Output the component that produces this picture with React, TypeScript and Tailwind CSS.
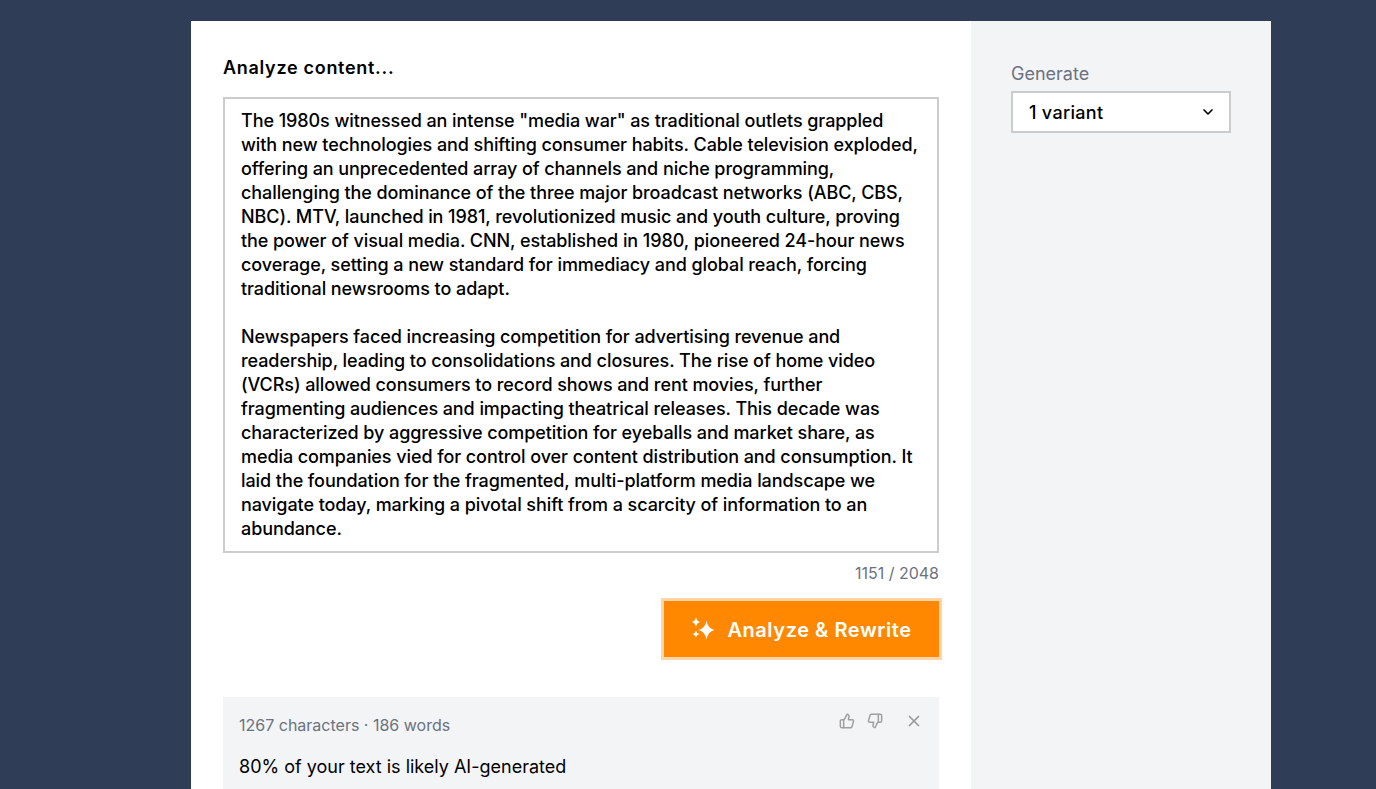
import { ThumbsUp, ThumbsDown, X, ChevronDown } from "lucide-react";

const body = [
  'The 1980s witnessed an intense "media war" as traditional outlets grappled',
  "with new technologies and shifting consumer habits. Cable television exploded,",
  "offering an unprecedented array of channels and niche programming,",
  "challenging the dominance of the three major broadcast networks (ABC, CBS,",
  "NBC). MTV, launched in 1981, revolutionized music and youth culture, proving",
  "the power of visual media. CNN, established in 1980, pioneered 24-hour news",
  "coverage, setting a new standard for immediacy and global reach, forcing",
  "traditional newsrooms to adapt.",
  "",
  "Newspapers faced increasing competition for advertising revenue and",
  "readership, leading to consolidations and closures. The rise of home video",
  "(VCRs) allowed consumers to record shows and rent movies, further",
  "fragmenting audiences and impacting theatrical releases. This decade was",
  "characterized by aggressive competition for eyeballs and market share, as",
  "media companies vied for control over content distribution and consumption. It",
  "laid the foundation for the fragmented, multi-platform media landscape we",
  "navigate today, marking a pivotal shift from a scarcity of information to an",
  "abundance.",
];

function Sparks() {
  return (
    <svg width="24" height="24" viewBox="0 0 24 24" fill="white">
      <path d="M15.5 3.5 Q16.6 11.2 23.5 13 Q16.6 14.8 15.5 22.5 Q14.4 14.8 7.5 13 Q14.4 11.2 15.5 3.5Z" />
      <path d="M5 0 Q5.6 3.8 9 5 Q5.6 6.2 5 10 Q4.4 6.2 1 5 Q4.4 3.8 5 0Z" />
      <path d="M5 13.5 Q5.5 16.4 8.5 17 Q5.5 17.6 5 20.5 Q4.5 17.6 1.5 17 Q4.5 16.4 5 13.5Z" />
    </svg>
  );
}

export default function App() {
  return (
    <div className="h-screen overflow-hidden bg-[#2f3d56] pt-[21px] font-['Inter',sans-serif]">
      <div className="ml-[191px] flex min-h-[768px] w-[1080px] bg-white">
        <div className="w-[780px] px-8 pt-[35px]">
          <h2 className="text-[18px] leading-6 font-semibold tracking-[0.7px] text-black">Analyze content...</h2>
          <div className="mt-[17px] h-[456px] border-2 border-[#cccccc] px-4 py-[10px] text-[18px] leading-6 font-[450] tracking-[-0.08px] text-black">
            {body.map((line, i) => (
              <div key={i} className="h-6 whitespace-nowrap">
                {line}
              </div>
            ))}
          </div>
          <div className="mt-[8px] text-right text-[16px] leading-6 text-[#6b7280]">1151 / 2048</div>
          <div className="mt-[13px] flex justify-end">
            <button className="-mr-[3px] flex h-[62px] w-[281px] items-center justify-center gap-[12px] border-[3px] border-[#ffd5a8] bg-[#ff8800] text-[20px] font-semibold tracking-[0.55px] text-white">
              <Sparks />
              <span className="pt-[2px]">Analyze &amp; Rewrite</span>
            </button>
          </div>
          <div className="mt-[37px] h-[200px] bg-[#f3f4f6] pl-4 pr-[17px] pt-4">
            <div className="flex items-center justify-between">
              <span className="text-[16px] leading-6 text-[#6b7280]">1267 characters · 186 words</span>
              <div className="-mt-2 flex items-center text-[#a0a0a0]">
                <ThumbsUp size={16} strokeWidth={2.25} />
                <ThumbsDown size={16} strokeWidth={2.25} className="ml-[12px]" />
                <X size={18} strokeWidth={2.25} className="ml-[22px] -mr-[1px] text-[#9a9a9a]" />
              </div>
            </div>
            <p className="mt-[18px] text-[18px] leading-6 text-black">80% of your text is likely AI-generated</p>
          </div>
        </div>
        <div className="w-[300px] bg-[#f3f4f6] px-10 pt-[41px]">
          <label className="block text-[18px] leading-6 text-[#6b7280]">Generate</label>
          <div className="mt-[5px] flex h-[42px] w-[220px] items-center justify-between border-2 border-[#cccccc] bg-white pl-4 pr-[13px] text-[18px] font-[450] tracking-[0.3px] text-black">
            <span>1 variant</span>
            <ChevronDown size={16} strokeWidth={2.5} />
          </div>
        </div>
      </div>
    </div>
  );
}
